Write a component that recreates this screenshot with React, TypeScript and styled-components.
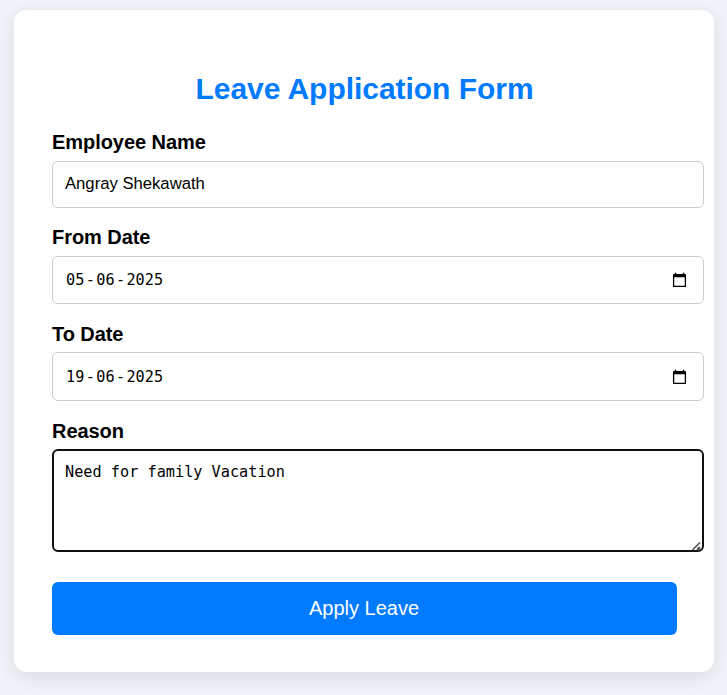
import React from 'react';
import styled, { createGlobalStyle } from 'styled-components';

const GlobalStyle = createGlobalStyle`
  * { box-sizing: border-box; }
  html, body { margin: 0; height: 100%; }
  body {
    background: #f0f4f8;
    color: #000;
    font-family: "Liberation Sans", Arial, sans-serif;
    overflow: hidden;
  }
`;

const Card = styled.form`
  width: 700px;
  height: 662px;
  margin: 10px 0 0 14px;
  padding: 61px 37px 37px 38px;
  border-radius: 13px;
  background: #fff;
  box-shadow: 0 5px 19px rgba(0, 0, 0, 0.1);
  display: flex;
  flex-direction: column;
`;

const Title = styled.h2`
  margin: 0 0 24px;
  font-size: 30px;
  line-height: 36px;
  letter-spacing: -0.04px;
  text-align: center;
  color: #007bff;
`;

const Field = styled.div<{ $height: number; $gap: number }>`
  height: ${(p) => p.$height}px;
  width: 652px;
  margin-bottom: ${(p) => p.$gap}px;
  display: flex;
  flex-direction: column;
  flex-shrink: 0;
`;

const Label = styled.label<{ $drop?: number }>`
  height: 30px;
  flex-shrink: 0;
  padding-top: ${(p) => p.$drop ?? 0}px;
  font-size: 20px;
  line-height: 23px;
  letter-spacing: -0.06px;
  font-weight: bold;
`;

const controlFrame = `
  flex: 1;
  width: 100%;
  border: 1px solid #ccc;
  border-radius: 6px;
  background: #fff;
  color: #000;
`;

const TextInput = styled.input`
  ${controlFrame}
  min-height: 0;
  padding: 0 12px 2px;
  outline: none;
  font: 16.67px "Liberation Sans", Arial, sans-serif;
`;

const DateBox = styled.div`
  ${controlFrame}
  display: flex;
  align-items: center;
  justify-content: space-between;
  padding: 0 16px 0 13px;
  font: 15.2px "DejaVu Sans Mono", monospace;
`;

const DateParts = styled.div`
  display: flex;
  gap: 1.4px;
`;

const ReasonBox = styled.textarea`
  ${controlFrame}
  border: 2px solid #101010;
  padding: 12px 11px 10px;
  outline: none;
  resize: none;
  font: 15.2px/19px "DejaVu Sans Mono", monospace;
  letter-spacing: 0.02px;
`;

const ReasonWrap = styled.div`
  position: relative;
  flex: 1;
  display: flex;
`;

const Grip = styled.svg`
  position: absolute;
  right: 2px;
  bottom: 1px;
`;

const SubmitButton = styled.button`
  height: 53px;
  flex-shrink: 0;
  border: 0;
  border-radius: 6px;
  background: #007bff;
  color: #fff;
  font: 20px "Liberation Sans", Arial, sans-serif;
  padding: 0 1px 1px 0;
`;

const CalendarIcon = () => (
  <svg width="15" height="16" viewBox="0 0 15 16">
    <path d="M2.7 0.7h1.5v2H2.7zM10.8 0.7h1.5v2h-1.5z" fill="#000" />
    <path d="M1 3a1 1 0 0 1 1-1h11a1 1 0 0 1 1 1v2.3H1z" fill="#000" />
    <path d="M1.6 4v10.4h11.8V4" fill="none" stroke="#000" strokeWidth="1.3" strokeLinejoin="round" />
  </svg>
);

const DateField = ({ value }: { value: string }) => {
  const [day, month, year] = value.split('-');
  return (
    <DateBox>
      <DateParts>
        <span>{day}</span><span>-</span><span>{month}</span><span>-</span><span>{year}</span>
      </DateParts>
      <CalendarIcon />
    </DateBox>
  );
};

export default function App() {
  return (
    <>
      <GlobalStyle />
      <Card>
        <Title>Leave Application Form</Title>
        <Field $height={77} $gap={18}>
          <Label>Employee Name</Label>
          <TextInput defaultValue="Angray Shekawath" />
        </Field>
        <Field $height={78} $gap={18}>
          <Label>From Date</Label>
          <DateField value="05-06-2025" />
        </Field>
        <Field $height={79} $gap={18}>
          <Label $drop={1}>To Date</Label>
          <DateField value="19-06-2025" />
        </Field>
        <Field $height={133} $gap={30}>
          <Label $drop={1}>Reason</Label>
          <ReasonWrap>
            <ReasonBox defaultValue="Need for family Vacation" spellCheck={false} />
            <Grip width="11" height="10" viewBox="0 0 11 10">
              <path d="M1.5 9 9 1.5M6 9 9 6.2" stroke="#555" strokeWidth="1.6" fill="none" />
              <circle cx="7.8" cy="7.6" r="1.3" stroke="#555" strokeWidth="1" fill="none" />
            </Grip>
          </ReasonWrap>
        </Field>
        <SubmitButton type="button">Apply Leave</SubmitButton>
      </Card>
    </>
  );
}
